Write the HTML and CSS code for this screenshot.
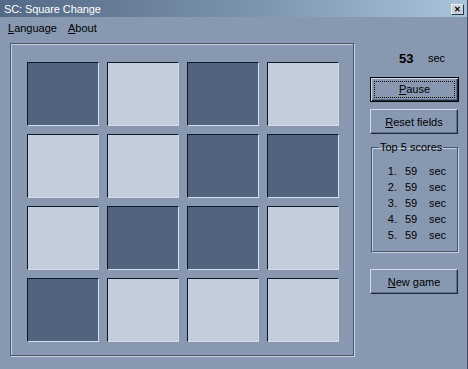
FILE: index.html
```html
<!DOCTYPE html>
<html lang="en">
<head>
    <meta charset="UTF-8">
    <title>SC: Square Change</title>
    <link rel="stylesheet" href="styles.css">
</head>
<body>
    <div class="window">
        <div class="titlebar">
            <span class="title">SC: Square Change</span>
            <span class="close">&#x2715;</span>
        </div>
        <div class="menubar">
            <span class="menu-item"><u>L</u>anguage</span>
            <span class="menu-item"><u>A</u>bout</span>
        </div>
        <div class="client">
            <div class="board">
                <div class="grid">
                    <div class="square dark"></div>
                    <div class="square light"></div>
                    <div class="square dark"></div>
                    <div class="square light"></div>
                    <div class="square light"></div>
                    <div class="square light"></div>
                    <div class="square dark"></div>
                    <div class="square dark"></div>
                    <div class="square light"></div>
                    <div class="square dark"></div>
                    <div class="square dark"></div>
                    <div class="square light"></div>
                    <div class="square dark"></div>
                    <div class="square light"></div>
                    <div class="square light"></div>
                    <div class="square light"></div>
                </div>
            </div>
            <div class="panel">
                <div class="timer">
                    <span class="time">53</span>
                    <span class="unit">sec</span>
                </div>
                <button class="btn default"><span class="focus"><u>P</u>ause</span></button>
                <button class="btn reset"><u>R</u>eset fields</button>
                <fieldset class="scores">
                    <legend>Top 5 scores</legend>
                    <div class="score"><span class="rank">1.</span><span>59</span><span>sec</span></div>
                    <div class="score"><span class="rank">2.</span><span>59</span><span>sec</span></div>
                    <div class="score"><span class="rank">3.</span><span>59</span><span>sec</span></div>
                    <div class="score"><span class="rank">4.</span><span>59</span><span>sec</span></div>
                    <div class="score"><span class="rank">5.</span><span>59</span><span>sec</span></div>
                </fieldset>
                <button class="btn newgame"><u>N</u>ew game</button>
            </div>
        </div>
    </div>
</body>
</html>
```

FILE: styles.css
```css
body {
    margin: 0;
    font-family: "Liberation Sans", Arial, sans-serif;
    font-size: 11px;
    color: #000;
}
.window {
    width: 468px;
    height: 369px;
    box-sizing: border-box;
    background-color: #8798b0;
    border-right: 1px solid #3e4d61;
    overflow: hidden;
}
.titlebar {
    height: 17px;
    display: flex;
    align-items: center;
    justify-content: space-between;
    padding: 0 3px 0 4px;
    background: linear-gradient(to right, #536985, #7d94ae 55%, #a8c4da);
}
.title {
    color: #fff;
    font-size: 11px;
    letter-spacing: -0.1px;
}
.close {
    width: 13px;
    height: 11px;
    margin-top: 1px;
    background-color: #c9d2dc;
    border: 1px solid;
    border-color: #eef2f6 #2b3646 #2b3646 #eef2f6;
    box-sizing: border-box;
    font-size: 8px;
    font-weight: bold;
    line-height: 9px;
    text-align: center;
}
.menubar {
    height: 21px;
    display: flex;
    align-items: center;
    padding-left: 8px;
    gap: 11px;
    font-size: 11px;
}
.client {
    display: flex;
    padding-top: 5px;
}
.board {
    margin-left: 10px;
    width: 344px;
    height: 313px;
    box-sizing: border-box;
    border: 1px solid #45556b;
    box-shadow: inset 1px 1px 0 #c6d2de, 1px 1px 0 #c6d2de;
    padding: 18px 0 0 16px;
}
.grid {
    display: grid;
    grid-template-columns: repeat(4, 72px);
    grid-template-rows: repeat(4, 64px);
    gap: 8px;
}
.square {
    box-sizing: border-box;
    border: 1px solid;
    border-color: #0f1828 #d2dce6 #d2dce6 #0f1828;
}
.square.dark {
    background-color: #52647d;
}
.square.light {
    background-color: #c4ceda;
}
.panel {
    margin-left: 16px;
    width: 89px;
    display: flex;
    flex-direction: column;
}
.timer {
    height: 34px;
    box-sizing: border-box;
    padding-bottom: 4px;
    display: flex;
    align-items: center;
    font-size: 11px;
}
.time {
    margin-left: 29px;
    font-weight: bold;
    font-size: 13px;
    width: 29px;
}
.btn {
    font-family: inherit;
    font-size: 11px;
    color: #000;
    background-color: #8798b0;
    border: 1px solid;
    border-color: #d0dae4 #1f2a3a #1f2a3a #d0dae4;
    box-shadow: inset -1px -1px 0 #5e6f86;
    padding: 0;
    height: 25px;
}
.btn.default {
    border: 1px solid #000;
    box-shadow: inset 1px 1px 0 #d0dae4, inset -1px -1px 0 #1f2a3a, inset -2px -2px 0 #5e6f86;
    padding: 3px;
}
.focus {
    display: block;
    height: 100%;
    box-sizing: border-box;
    border: 1px dotted #000;
    line-height: 15px;
}
.btn.reset {
    margin-top: 7px;
    width: 88px;
}
.scores {
    margin: 7px 0 0 1px;
    width: 87px;
    height: 111px;
    box-sizing: border-box;
    padding: 10px 0 0 0;
    border: 1px solid #45556b;
    box-shadow: inset 1px 1px 0 #c6d2de, 1px 1px 0 #c6d2de;
}
.scores legend {
    font-size: 11px;
    padding: 0 1px;
    margin-left: 7px;
}
.score {
    display: grid;
    grid-template-columns: 25px 24px 20px;
    height: 16px;
    line-height: 16px;
    font-size: 11px;
}
.score span:nth-child(2) {
    padding-left: 8px;
}
.score span:nth-child(3) {
    padding-left: 8px;
}
.rank {
    text-align: right;
}
.btn.newgame {
    margin-top: 17px;
    width: 88px;
    height: 25px;
}
```
